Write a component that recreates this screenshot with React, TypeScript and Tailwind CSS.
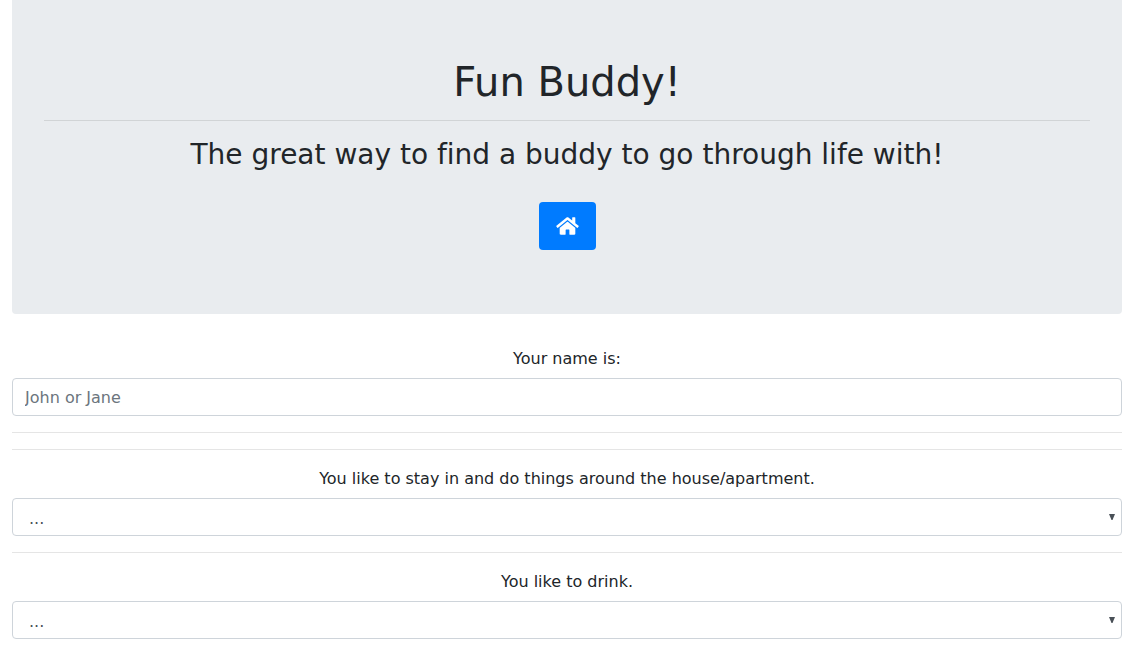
const questions = [
  { id: "home", label: "You like to stay in and do things around the house/apartment." },
  { id: "drink", label: "You like to drink." },
];

function HomeIcon() {
  return (
    <svg viewBox="0 0 576 512" className="h-5 w-[23px]" fill="currentColor" aria-hidden="true">
      <path d="M488 312.7V456c0 13.3-10.7 24-24 24H348c-6.6 0-12-5.4-12-12V356c0-6.6-5.4-12-12-12h-72c-6.6 0-12 5.4-12 12v112c0 6.6-5.4 12-12 12H112c-13.3 0-24-10.7-24-24V312.7c0-3.6 1.6-7 4.4-9.3l188-154.8c4.4-3.6 10.8-3.6 15.3 0l188 154.8c2.7 2.3 4.3 5.7 4.3 9.3zm83.6-60.9L488 182.9V44.4c0-6.6-5.4-12-12-12h-56c-6.6 0-12 5.4-12 12V117l-89.5-73.7c-17.7-14.6-43.3-14.6-61 0L4.4 251.8c-5.1 4.2-5.8 11.8-1.6 16.9l25.5 31c4.2 5.1 11.8 5.8 16.9 1.6l235.2-193.7c4.4-3.6 10.8-3.6 15.3 0l235.2 193.7c5.1 4.2 12.7 3.5 16.9-1.6l25.5-31c4.2-5.2 3.4-12.7-1.7-16.9z" />
    </svg>
  );
}

function Question({ id, label }: { id: string; label: string }) {
  return (
    <div className="border-t border-black/10 py-4">
      <label htmlFor={id} className="mb-1.5 block text-center leading-[26px]">{label}</label>
      <div className="relative">
        <select
          id={id}
          className="block h-[38px] w-full appearance-none rounded border border-[#ced4da] bg-white px-4 pt-1 text-[#495057]"
        >
          <option value="">...</option>
          <option>1</option>
          <option>2</option>
          <option>3</option>
          <option>4</option>
          <option>5</option>
        </select>
        <svg viewBox="0 0 6 6" className="pointer-events-none absolute top-4 right-[7px] size-[6px]" aria-hidden="true">
          <path d="M0 0h6L3.5 6h-1z" fill="#495057" />
        </svg>
      </div>
    </div>
  );
}

export default function App() {
  return (
    <main className="pr-[13px] pl-3 font-['Verdana','DejaVu_Sans',sans-serif] text-base text-[#212529] [font-variant-ligatures:none]">
      <header className="mb-8 rounded-b bg-[#e9ecef] px-8 pt-14 pb-16 text-center">
        <h1 className="text-[40px] leading-[52px]">Fun Buddy!</h1>
        <hr className="mt-3 mb-4 border-black/10" />
        <h2 className="mb-[29px] text-[28px] leading-9">The great way to find a buddy to go through life with!</h2>
        <button type="button" aria-label="Home" className="inline-flex h-12 items-center rounded bg-[#007bff] px-[17px] text-white">
          <HomeIcon />
        </button>
      </header>
      <form>
        <div className="mb-4">
          <label htmlFor="name" className="mb-1.5 block text-center leading-[26px]">Your name is:</label>
          <input
            id="name"
            type="text"
            placeholder="John or Jane"
            className="block h-[38px] w-full rounded border border-[#ced4da] px-3 placeholder:text-[#6c757d]"
          />
        </div>
        <hr className="mb-4 border-black/10" />
        {questions.map((q) => (
          <Question key={q.id} {...q} />
        ))}
      </form>
    </main>
  );
}
